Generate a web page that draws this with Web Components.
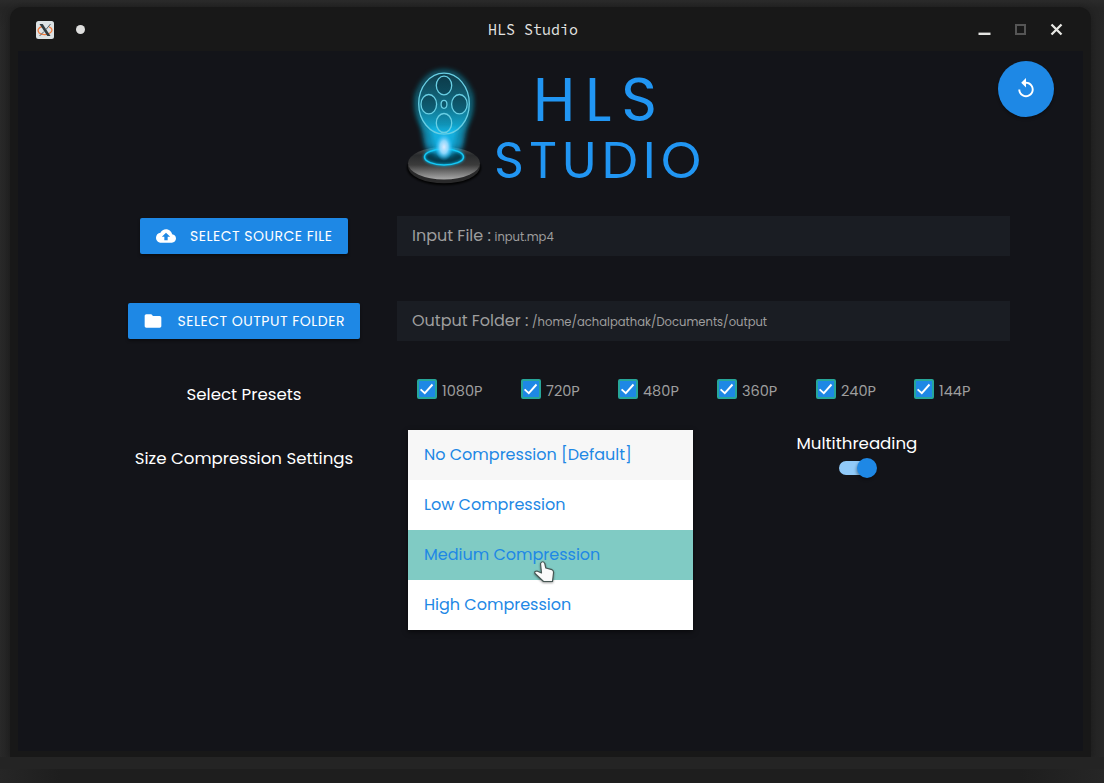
<!DOCTYPE html>
<html lang="en">
<head>
<meta charset="utf-8">
<title>HLS Studio</title>
<style>
html,body{margin:0;height:100%;overflow:hidden}
body{background:linear-gradient(90deg,#292929,#242424 10px,#242424 1091px,#272727 1104px);font-family:Poppins,Inter,sans-serif;color:#fff}
</style>
</head>
<body>
<hls-window></hls-window>
<script>
const define=(name,html,ready)=>customElements.define(name,class extends HTMLElement{
  connectedCallback(){
    if(this.shadowRoot)return;
    this.attachShadow({mode:'open'}).innerHTML=html;
    if(ready)ready(this,this.shadowRoot);
  }
});

/* Single line of text tracked out to the width given in its w attribute. */
define('fit-text','<style>:host{display:inline-block;white-space:pre}span{display:inline-block}</style><span><slot></slot></span>',(el,root)=>{
  const s=root.querySelector('span'),w=+el.getAttribute('w'),n=el.textContent.length;
  const d=(w-s.getBoundingClientRect().width)/(n-1);
  s.style.letterSpacing=d+'px';
  s.style.marginRight=-d+'px';
});

define('title-bar',`<style>
:host{display:grid;grid-template-columns:1fr auto 1fr;align-items:center;height:44px;padding:0 25px 0 26px;box-sizing:border-box;color:#e4e4e2;font:15px "Source Code Pro","Liberation Mono",monospace}
.l{display:flex;align-items:center;gap:22px;padding-top:1px}
.c{transform:translateX(-18px)}
.r{display:flex;justify-content:flex-end;gap:16px}
svg{display:block}
</style>
<div class="l">
<svg width="18" height="18" viewBox="0 0 18 18"><rect width="18" height="18" rx="2.5" fill="#dce2e4"/><path d="M13 5.800c3 1 4 3.500 1.800 5.600C12 14.200 6 14.200 3.200 12 .8 9.800 2.200 6.500 6 5.500" fill="none" stroke="#f47b3c" stroke-width="1.300"/><path d="M3.500 3h3.200l7.800 12h-3.200z" fill="#303b40"/><path d="M14.500 3 10 8.500M8 10.500 3.500 15" stroke="#56646a" stroke-width="1"/></svg>
<svg width="9" height="9"><circle cx="4.500" cy="4.500" r="4.500" fill="#dededd"/></svg></div>
<div class="c">HLS Studio</div>
<div class="r">
<svg width="20" height="20"><path d="M4.500 14.800h12" stroke="#e4e4e2" stroke-width="2.400"/></svg>
<svg width="20" height="20"><path d="M6 6h9v9h-9z" fill="none" stroke="#555" stroke-width="2"/></svg>
<svg width="20" height="20"><path d="M5.500 5.500 15.500 15.500M15.500 5.500 5.500 15.500" stroke="#e8e8e4" stroke-width="2.300"/></svg></div>`);

define('reel-logo',`<style>:host{display:block}svg{display:block}</style>
<svg width="100" height="130" viewBox="0 0 100 130">
<defs>
<linearGradient id="cone" x1="0" y1="0" x2="0" y2="1"><stop offset="0" stop-color="#0a8fb0" stop-opacity="0"/><stop offset=".45" stop-color="#0a9cc0" stop-opacity=".6"/><stop offset=".8" stop-color="#12b0e0" stop-opacity=".8"/><stop offset="1" stop-color="#12c0ff" stop-opacity=".3"/></linearGradient>
<linearGradient id="face" x1="0" y1="0" x2="0" y2="1"><stop offset="0" stop-color="#103e4c"/><stop offset=".45" stop-color="#11677d"/><stop offset="1" stop-color="#12b4e0"/></linearGradient>
<linearGradient id="disk" x1="0" y1="0" x2="0" y2="1"><stop offset="0" stop-color="#555"/><stop offset=".25" stop-color="#292b2d"/><stop offset=".55" stop-color="#3b3b3b"/><stop offset="1" stop-color="#aaa"/></linearGradient>
<radialGradient id="hot"><stop offset="0" stop-color="#dcebff"/><stop offset=".45" stop-color="#9bdcff" stop-opacity=".9"/><stop offset="1" stop-color="#17bcff" stop-opacity="0"/></radialGradient>
<filter id="b2" x="-40%" y="-40%" width="180%" height="180%"><feGaussianBlur stdDeviation="2.500"/></filter>
<filter id="b1" x="-40%" y="-40%" width="180%" height="180%"><feGaussianBlur stdDeviation="1.200"/></filter>
</defs>
<ellipse cx="44" cy="108" rx="37" ry="17" fill="#050506" filter="url(#b1)"/>
<ellipse cx="44" cy="106.500" rx="36" ry="16.800" fill="#29292a"/>
<ellipse cx="44" cy="103.300" rx="36" ry="16.300" fill="url(#disk)"/>
<ellipse cx="44" cy="97" rx="20" ry="8.500" fill="#063b4d"/>
<ellipse cx="44" cy="44" rx="27" ry="32" fill="none" stroke="#0c95b4" stroke-width="5" opacity=".6" filter="url(#b2)"/>
<path d="M13 28 26 90Q44 102 62 90L75 28Q44 60 13 28Z" fill="url(#cone)" filter="url(#b2)"/>
<ellipse cx="44" cy="43.700" rx="25.300" ry="30.500" fill="url(#face)"/>
<path d="M30 68 36 94Q44 99 52 94L58 68Z" fill="#15bdf2" opacity=".7" filter="url(#b2)"/>
<g fill="#083342" fill-opacity=".4" stroke="#69cfe4" stroke-width="1.300">
<ellipse cx="44" cy="43.700" rx="25.300" ry="30.500" fill="none"/>
<ellipse cx="44" cy="25.500" rx="7.700" ry="9.300"/><ellipse cx="28.800" cy="44.200" rx="7.800" ry="9.700"/><ellipse cx="59.400" cy="44.200" rx="7.800" ry="9.700"/><ellipse cx="44" cy="63" rx="7.700" ry="9.500" fill-opacity=".1"/><ellipse cx="44" cy="44.300" rx="2.900" ry="4"/></g>
<ellipse cx="44" cy="97" rx="19.500" ry="8" fill="none" stroke="#0cb8e8" stroke-width="3" opacity=".6" filter="url(#b1)"/>
<ellipse cx="44" cy="97" rx="19.500" ry="8" fill="none" stroke="#14c9f6" stroke-width="1.500"/>
<ellipse cx="44" cy="87" rx="9" ry="14" fill="url(#hot)"/>
</svg>`);

define('app-brand',`<style>
:host{display:flex;align-items:flex-start}
.t{padding-top:7px;color:#2196f3;display:flex;flex-direction:column}
.a{font-size:61px;line-height:66px;margin-left:33px}
.b{font-size:51px;line-height:54px;margin-left:-6px}
</style><reel-logo></reel-logo><div class="t"><fit-text class="a" w="124">HLS</fit-text><fit-text class="b" w="207">STUDIO</fit-text></div>`);

define('reset-button',`<style>:host{display:grid;place-items:center;width:56px;height:56px;border-radius:50%;background:#1e88e5;box-shadow:0 2px 3px #0005}</style>
<svg width="24" height="24" viewBox="-.3 0 24.600 25" fill="#fff"><path d="M12 5V1L7 6l5 5V7c3.310 0 6 2.690 6 6s-2.690 6-6 6-6-2.690-6-6H4c0 4.420 3.580 8 8 8s8-3.580 8-8-3.580-8-8-8z"/></svg>`);

define('pick-button',`<style>:host{display:flex;align-items:center;height:36px;box-sizing:border-box;padding:0 15.500px;gap:14.500px;border-radius:2px;background:#1e88e5;font-size:14px;letter-spacing:.5px;white-space:nowrap;box-shadow:0 2px 3px #0006}
svg{display:block;width:20px;height:20px}</style><svg viewBox="0 0 24 24" fill="#fff"><path/></svg><slot></slot>`,(el,r)=>{
  r.querySelector('path').setAttribute('d',el.getAttribute('icon')==='cloud'
   ?'M19.350 10.040C18.670 6.590 15.640 4 12 4 9.110 4 6.600 5.640 5.350 8.040 2.340 8.360 0 10.910 0 14c0 3.310 2.690 6 6 6h13c2.760 0 5-2.240 5-5 0-2.640-2.050-4.780-4.650-4.960zM14 13v4h-4v-4H7l5-5 5 5h-3z'
   :'M10 4H4c-1.100 0-1.990.900-1.990 2L2 18c0 1.100.900 2 2 2h16c1.100 0 2-.900 2-2V8c0-1.100-.900-2-2-2h-8l-2-2z');
});

define('path-field',`<style>:host{display:flex;align-items:baseline;height:40px;line-height:39px;box-sizing:border-box;padding-left:15px;background:#1a1d23;color:#9e9e9e;font-size:16px;gap:3.700px}::slotted([slot=value]){font-size:11.570px}</style><span><slot></slot></span><slot name="value"></slot>`);

define('preset-check',`<style>:host{display:flex;gap:5px;color:#9e9e9e;font-size:14.500px;line-height:24px;height:24px}
i{width:16px;height:16px;border:2px solid #26a69a;border-radius:2px;background:#1e88e5}svg{display:block}</style>
<i><svg width="16" height="16" viewBox="0 0 16 16"><path d="M1.600 8.400 5.800 12.200 13.500 3.500" fill="none" stroke="#fff" stroke-width="1.900"/></svg></i><slot></slot>`);

define('toggle-switch',`<style>:host{display:flex;align-items:center;justify-content:flex-end;width:36px;height:14px;border-radius:7px;background:#90caf9}
i{flex:none;width:20px;height:20px;border-radius:50%;background:#1e88e5;margin-right:-2px;box-shadow:-1px 2px 3px #0005}</style><i></i>`);

define('option-item',`<style>:host{display:block;height:50px;line-height:49px;padding:0 16px;color:#1e88e5;background:#fff}:host([selected]){background:#f7f7f7}:host([active]){background:#80cbc4}</style><slot></slot>`);

define('option-list',`<style>:host{display:block;position:relative;width:285px;box-shadow:0 2px 5px #0008}
svg{position:absolute;left:124px;top:129px}</style><slot></slot>
<svg width="24" height="26" viewBox="0 0 24 26"><path d="M8.500 4.500Q10.800 1 12.800 4.500L13.800 9 20 10.700Q21.800 11.500 21.500 14L20.500 22.500H11.500L3 14.500Q2 12 5 12L9.500 14Z" fill="#fafafa" stroke="#465653" stroke-width="1.200" stroke-linejoin="round" style="filter:drop-shadow(0 1px 1px #0006)"/></svg>`);

define('hls-window',`<style>
:host{display:flex;flex-direction:column;height:783px;padding:7px 13px 0 10px;box-sizing:border-box;background:linear-gradient(#2b2b2b,#252525 8px,#0000 30px)}
.win{height:750px;box-sizing:border-box;background:#181818;border-radius:12px 12px 0 0;padding:0 8px 6px;display:flex;flex-direction:column;box-shadow:0 0 8px #0004}
title-bar{margin:0 -8px}
main{flex:1;background:#131419}
header{display:grid;grid-template-columns:382px 1fr 56px;padding:9px 29px 0 0;height:165px;box-sizing:border-box}
reset-button{margin-top:1px}
.form{display:grid;grid-template-columns:306px 613px;grid-template-rows:85px 85px 44px 200px;margin-left:73px}
.k{display:flex;justify-content:center;align-items:flex-start}
.k pick-button{margin-top:2px}
.lab,.thread{font-size:16.640px;line-height:24px}
.presets{margin-top:-3px}
.size{padding-top:17px}
.checks{display:grid;grid-template-columns:104px 97px 99px 99px 98px auto;margin:-7px 0 0 20px}
.last{display:flex;align-items:flex-start;padding-left:11px}
.thread{display:flex;flex-direction:column;align-items:center;margin-left:103.500px;padding-top:2px}
toggle-switch{margin-top:5px}
.foot{height:12px;margin:0 -13px 0 -10px;background:#242424;position:relative}
.rest{flex:1;margin:0 -13px 0 -10px;background:linear-gradient(90deg,#262626,#1e1e1e 60px,#1e1e1e 1020px,#262626)}
</style>
<div class="win"><title-bar></title-bar><main>
<header><span></span><app-brand></app-brand><reset-button></reset-button></header>
<div class="form">
<div class="k"><pick-button icon="cloud">SELECT SOURCE FILE</pick-button></div>
<path-field>Input File :<span slot="value">input.mp4</span></path-field>
<div class="k"><pick-button icon="folder">SELECT OUTPUT FOLDER</pick-button></div>
<path-field>Output Folder :<span slot="value">/home/achalpathak/Documents/output</span></path-field>
<div class="k lab presets">Select Presets</div>
<div class="checks"><preset-check>1080P</preset-check><preset-check>720P</preset-check><preset-check>480P</preset-check><preset-check>360P</preset-check><preset-check>240P</preset-check><preset-check>144P</preset-check></div>
<div class="k lab size">Size Compression Settings</div>
<div class="last"><option-list><option-item selected>No Compression [Default]</option-item><option-item>Low Compression</option-item><option-item active>Medium Compression</option-item><option-item>High Compression</option-item></option-list>
<div class="thread">Multithreading<toggle-switch></toggle-switch></div></div>
</div></main></div>
<div class="foot"></div><div class="rest"></div>`);
</script>
</body>
</html>
